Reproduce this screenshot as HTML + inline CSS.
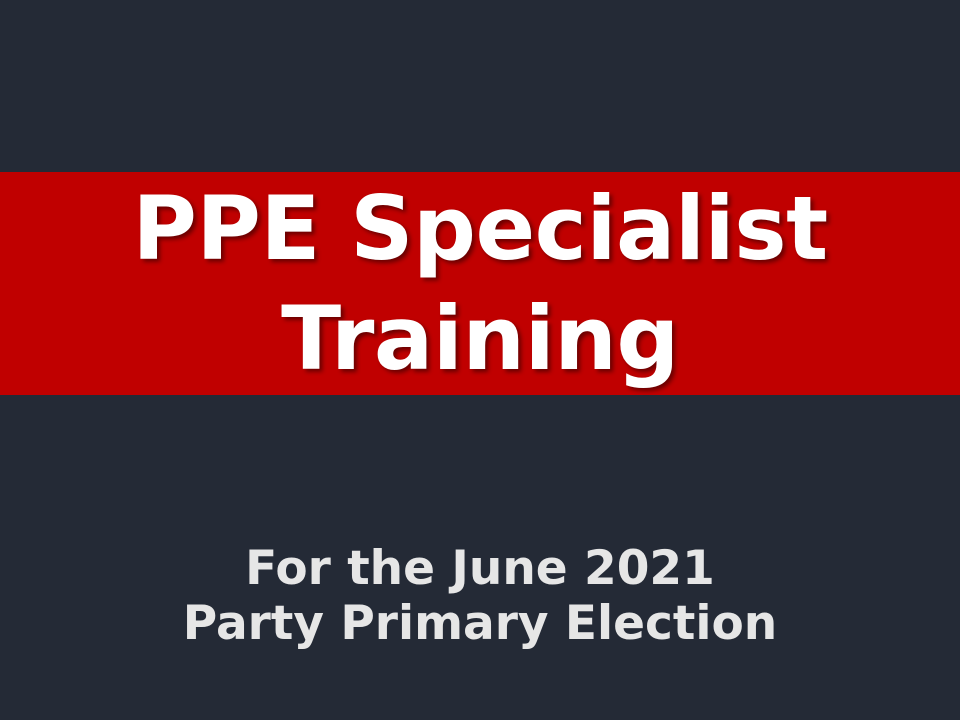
<!DOCTYPE html>
<html><head><style>
html,body{margin:0;padding:0}
body{width:960px;height:720px;background:#242a36;position:relative;overflow:hidden;font-family:"DejaVu Sans",Verdana,sans-serif;font-weight:bold}
.band{position:absolute;left:0;top:172px;width:960px;height:223px;background:#c00000}
.t{position:absolute;left:0;width:960px;text-align:center;color:#fff;font-size:88px;letter-spacing:-0.5px;line-height:1;text-shadow:3px 3px 4px rgba(0,0,0,.45);white-space:nowrap}
.s{position:absolute;left:0;width:960px;text-align:center;color:#e6e6e6;font-size:47px;line-height:1;white-space:nowrap}
</style></head><body>
<div class="band"></div>
<div class="t" style="top:185px">PPE Specialist</div>
<div class="t" style="top:295px">Training</div>
<div class="s" style="top:545px">For the June 2021</div>
<div class="s" style="top:600px">Party Primary Election</div>
</body></html>
